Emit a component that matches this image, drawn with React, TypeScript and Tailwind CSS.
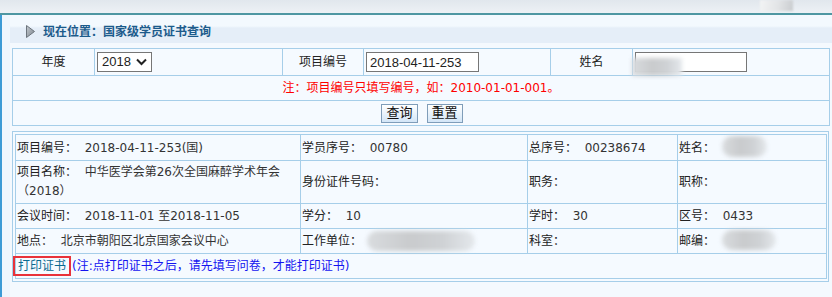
import { useState } from 'react';

const cell = 'border border-[#a6cee9]';

function Blur({ w, h, className = '' }: { w: string; h: string; className?: string }) {
  // mosaic used to hide personal data in the screenshot
  return (
    <span className={`inline-block align-middle rounded-full blur-[2px] bg-[linear-gradient(90deg,#d9dcdf,#c9cbcd_40%,#cfd2d5_70%,#e4e8ec)] ${w} ${h} ${className}`} />
  );
}

function Field({ label, value, children }: { label: string; value?: string; children?: React.ReactNode }) {
  return (
    <span>
      <span className="text-[#222]">{label}：</span>
      {value !== undefined && <span className="text-[#333]">{'\u00a0\u00a0'}{value}</span>}
      {children}
    </span>
  );
}

export default function App() {
  const [year, setYear] = useState('2018');

  return (
    <div className="w-[832px] h-[297px] overflow-hidden bg-[#f4f9fe] text-[12px] leading-[18px] font-[family-name:'DejaVu_Sans','Noto_Sans_CJK_SC',sans-serif]">
      {/* top strip */}
      <div className="relative h-[13px] bg-[linear-gradient(180deg,#e1e7ed,#edf1f5)]">
        <div className="absolute left-[760px] top-0 h-[11px] w-[33px] blur-[1px] bg-[linear-gradient(100deg,#f3f4f5,#e2e4e6_55%,#c9cccf)]" />
      </div>
      <div className="h-[2px] bg-[#4e97a2]" />

      <div className="flex h-[282px]">
        <div className="w-[2px] bg-[#3b9ad5]" />
        <div className="w-[8px] bg-[#eef6fd]" />
        <div className="flex-1">
          {/* header */}
          <div className="flex items-end h-[28px] bg-[linear-gradient(180deg,#f3f9fe_0,#f3f9fe_11px,#e5eef8_13px,#e5eef8)]">
            <div className="flex items-center h-[20px] pl-[16px] gap-[8px]">
              <svg width="9" height="13" viewBox="0 0 9 13" className="-mt-[3px]">
                <defs>
                  <linearGradient id="tri" x1="0" y1="0" x2="1" y2="1">
                    <stop offset="0" stopColor="#c5cbd1" />
                    <stop offset="1" stopColor="#7c848c" />
                  </linearGradient>
                </defs>
                <polygon points="0.5,0.5 8.5,6.5 0.5,12.5" fill="url(#tri)" stroke="#6c747c" strokeWidth="1" />
              </svg>
              <span className="font-bold text-[#1c5b8b] -mt-[3px]">现在位置：国家级学员证书查询</span>
            </div>
          </div>

          {/* search form */}
          <table className="mt-[5px] ml-[2px] w-[817px] table-fixed border-collapse bg-[#f5faff] text-[#222]">
            <colgroup>
              <col className="w-[82px]" />
              <col className="w-[188px]" />
              <col className="w-[81px]" />
              <col className="w-[187px]" />
              <col className="w-[82px]" />
              <col className="w-[197px]" />
            </colgroup>
            <tbody>
              <tr className="h-[27px]">
                <td className={`${cell} text-center`}>年度</td>
                <td className={`${cell} pl-[2px]`}>
                  <div className="relative w-[55px] h-[20px]">
                    <select
                      value={year}
                      onChange={(e) => setYear(e.target.value)}
                      className="appearance-none w-full h-full border border-[#767676] bg-white pl-[4px] text-[13px] text-[#222] font-[family-name:'Liberation_Sans',sans-serif] outline-none"
                    >
                      <option>2018</option>
                      <option>2017</option>
                      <option>2016</option>
                    </select>
                    <svg className="pointer-events-none absolute right-[5px] top-[6px]" width="11" height="8" viewBox="0 0 11 8">
                      <path d="M1 1.5 L5.5 6 L10 1.5" fill="none" stroke="#222" strokeWidth="2" />
                    </svg>
                  </div>
                </td>
                <td className={`${cell} text-center`}>项目编号</td>
                <td className={`${cell} pl-[2px]`}>
                  <input
                    defaultValue="2018-04-11-253"
                    className="block w-[113px] h-[20px] border border-[#767676] bg-white px-[3px] text-[13px] text-[#222] font-[family-name:'Liberation_Sans',sans-serif] outline-none"
                  />
                </td>
                <td className={`${cell} text-center`}>姓名</td>
                <td className={`${cell} pl-[2px]`}>
                  <div className="relative w-[112px]">
                    <input className="block w-[112px] h-[20px] border border-[#767676] bg-white px-[3px] text-[13px] outline-none" />
                    <Blur w="w-[50px]" h="h-[18px]" className="absolute -left-[3px] top-[6px] rounded-none" />
                  </div>
                </td>
              </tr>
              <tr className="h-[25px]">
                <td colSpan={6} className={`${cell} text-center text-[#ff0000]`}>
                  注：项目编号只填写编号，如：2010-01-01-001。
                </td>
              </tr>
              <tr className="h-[25px]">
                <td colSpan={6} className={`${cell} text-center`}>
                  <div className="flex justify-center gap-[9px] pl-[2px]">
                    <button className="h-[19px] px-[4px] border border-[#7f9db9] bg-[linear-gradient(180deg,#ffffff,#d3e6f7)] text-[13px] leading-[16px] text-[#111]">
                      查询
                    </button>
                    <button className="h-[19px] px-[4px] border border-[#7f9db9] bg-[linear-gradient(180deg,#ffffff,#d3e6f7)] text-[13px] leading-[16px] text-[#111]">
                      重置
                    </button>
                  </div>
                </td>
              </tr>
            </tbody>
          </table>

          {/* result */}
          <div className="mt-[5px] ml-[2px] w-[817px] border border-[#a6cee9] p-[2px] bg-[#f5faff]">
            <table className="w-full table-fixed border-collapse">
              <colgroup>
                <col className="w-[285px]" />
                <col className="w-[227px]" />
                <col className="w-[150px]" />
                <col className="w-[149px]" />
              </colgroup>
              <tbody>
                <tr className="h-[26px]">
                  <td className={`${cell} pl-[1px]`}><Field label="项目编号" value="2018-04-11-253(国)" /></td>
                  <td className={`${cell} pl-[1px]`}><Field label="学员序号" value="00780" /></td>
                  <td className={`${cell} pl-[1px]`}><Field label="总序号" value="00238674" /></td>
                  <td className={`${cell} pl-[1px]`}>
                    <Field label="姓名"><Blur w="w-[45px]" h="h-[21px]" className="ml-[7px] -mt-[4px]" /></Field>
                  </td>
                </tr>
                <tr className="h-[43px]">
                  <td className={`${cell} pl-[1px] leading-[19px]`}>
                    <span className="text-[#222]">项目名称：</span>
                    <span className="text-[#333]">{'\u00a0\u00a0'}中华医学会第26次全国麻醉学术年会</span>
                    <br />
                    <span className="text-[#333]">（2018）</span>
                  </td>
                  <td className={`${cell} pl-[1px]`}><Field label="身份证件号码" /></td>
                  <td className={`${cell} pl-[1px]`}><Field label="职务" /></td>
                  <td className={`${cell} pl-[1px]`}><Field label="职称" /></td>
                </tr>
                <tr className="h-[25px]">
                  <td className={`${cell} pl-[1px]`}><Field label="会议时间" value="2018-11-01 至2018-11-05" /></td>
                  <td className={`${cell} pl-[1px]`}><Field label="学分" value="10" /></td>
                  <td className={`${cell} pl-[1px]`}><Field label="学时" value="30" /></td>
                  <td className={`${cell} pl-[1px]`}><Field label="区号" value="0433" /></td>
                </tr>
                <tr className="h-[25px]">
                  <td className={`${cell} pl-[1px]`}><Field label="地点" value="北京市朝阳区北京国家会议中心" /></td>
                  <td className={`${cell} pl-[1px]`}>
                    <Field label="工作单位"><Blur w="w-[108px]" h="h-[20px]" className="ml-[5px]" /></Field>
                  </td>
                  <td className={`${cell} pl-[1px]`}><Field label="科室" /></td>
                  <td className={`${cell} pl-[1px]`}>
                    <Field label="邮编"><Blur w="w-[54px]" h="h-[20px]" className="ml-[7px] -mt-[3px]" /></Field>
                  </td>
                </tr>
                <tr className="h-[25px]">
                  <td colSpan={4} className={`${cell}`}>
                    <span className="inline-block -ml-[3px] border-2 border-[#e8323a] px-[3px] leading-[16px] text-[#0b6a90]">
                      打印证书
                    </span>
                    <span className="ml-[1px] text-[#1414f0]">(注:点打印证书之后，请先填写问卷，才能打印证书)</span>
                  </td>
                </tr>
              </tbody>
            </table>
          </div>
        </div>
      </div>
    </div>
  );
}
